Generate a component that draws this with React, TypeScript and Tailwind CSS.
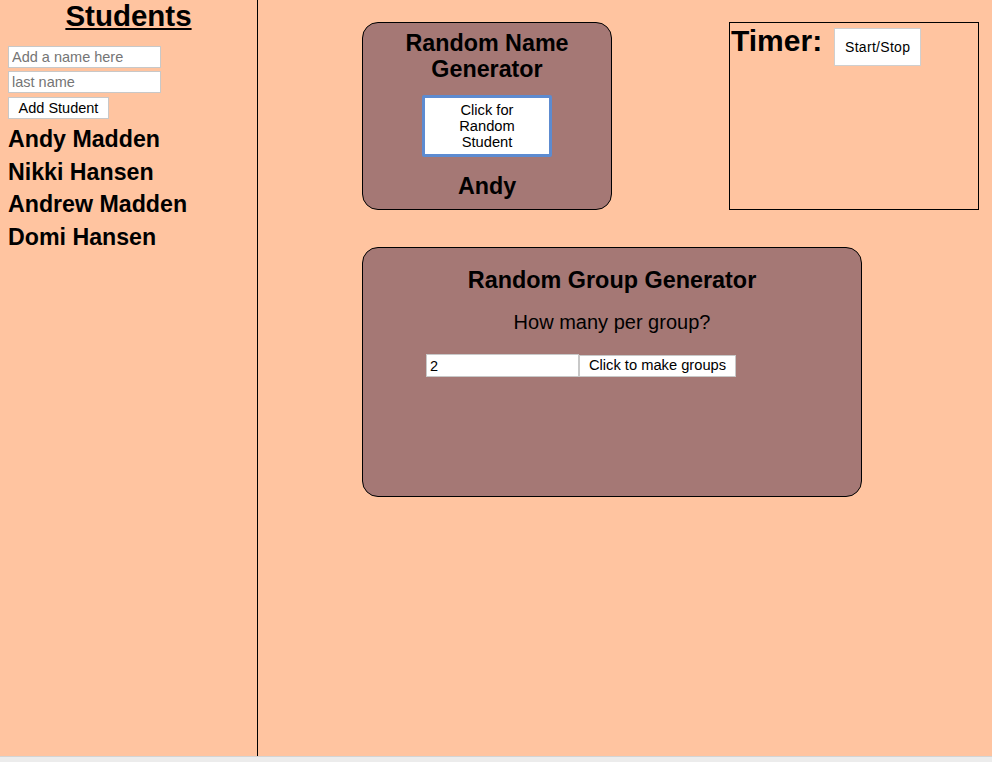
import React from "react";

const students = ["Andy Madden", "Nikki Hansen", "Andrew Madden", "Domi Hansen"];

export default function App() {
  return (
    <div className="w-[992px] h-[762px] bg-[#ececec] font-['Liberation_Sans',Arial,sans-serif] text-black overflow-hidden">
      <div className="flex h-[757px] bg-[#ffc4a0] border-b border-[#d4d4d4]">
        {/* Sidebar */}
        <aside className="w-[258px] shrink-0 border-r border-black pl-2">
          <h1 className="text-[29.5px] font-bold underline text-center leading-[31px] pr-2">Students</h1>
          <div className="mt-[15px] flex flex-col gap-[3px]">
            <input
              placeholder="Add a name here"
              className="w-[153px] h-[22px] bg-white border border-[#c8c8c8] px-[3px] text-[14.5px] placeholder:text-[#757575] outline-none"
            />
            <input
              placeholder="last name"
              className="w-[153px] h-[22px] bg-white border border-[#c8c8c8] px-[3px] text-[14.5px] placeholder:text-[#757575] outline-none"
            />
            <button className="mt-[1px] w-[101px] h-[22px] bg-white border border-[#c8c8c8] text-[14.5px] leading-none">
              Add Student
            </button>
          </div>
          <ul className="mt-[4px]">
            {students.map((s) => (
              <li key={s} className="text-[23.2px] font-bold leading-[32.5px]">
                {s}
              </li>
            ))}
          </ul>
        </aside>

        {/* Main */}
        <main className="flex-1 pl-[104px] pt-[22px]">
          <div className="flex">
            <section className="w-[250px] h-[188px] bg-[#a57875] border border-black rounded-[16px] flex flex-col items-center pt-[7px]">
              <h2 className="text-[23.3px] font-bold leading-[26px] text-center">
                Random Name
                <br />
                Generator
              </h2>
              <button className="mt-[13px] w-[130px] h-[62px] bg-white border-[3px] border-[#5d8bd0] rounded-[2px] text-[14.7px] leading-[16px]">
                Click for
                <br />
                Random
                <br />
                Student
              </button>
              <p className="mt-[16px] text-[23.3px] font-bold leading-[26px]">Andy</p>
            </section>

            <section className="ml-[117px] w-[250px] h-[188px] border border-black flex items-start">
              <h2 className="ml-[1px] mt-[1px] text-[30px] font-bold leading-[34px]">Timer:</h2>
              <button className="ml-[12px] mt-[5px] w-[87px] h-[38px] bg-white border border-[#cfcfcf] text-[14px] tracking-[0.3px]">
                Start/Stop
              </button>
            </section>
          </div>

          <section className="mt-[37px] w-[500px] h-[250px] bg-[#a57875] border border-black rounded-[16px] flex flex-col items-center pt-[19px]">
            <h2 className="text-[23.4px] font-bold leading-[26px]">Random Group Generator</h2>
            <p className="mt-[18px] text-[20px] leading-[22px]">How many per group?</p>
            <div className="mt-[21px] flex items-center self-start ml-[63px]">
              <input
                defaultValue="2"
                className="w-[153px] h-[23px] bg-white border border-[#c8c8c8] px-[3px] text-[14.5px] outline-none"
              />
              <button className="w-[157px] h-[22px] bg-white border border-[#c8c8c8] text-[14.7px] leading-none">
                Click to make groups
              </button>
            </div>
          </section>
        </main>
      </div>
    </div>
  );
}
